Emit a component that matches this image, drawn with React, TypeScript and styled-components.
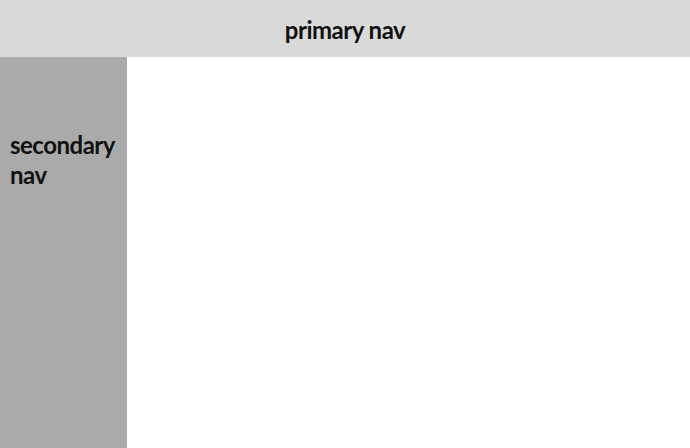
import React from "react";
import styled, { createGlobalStyle } from "styled-components";

const Global = createGlobalStyle`
  html, body {
    margin: 0;
    padding: 0;
    height: 100%;
  }
  body {
    font-family: Lato, "Open Sans", sans-serif;
    color: #111;
  }
  #root {
    height: 100%;
  }
`;

const Layout = styled.div`
  display: grid;
  grid-template-columns: 127px 1fr;
  grid-template-rows: 57px 1fr;
  height: 100vh;
`;

const PrimaryNav = styled.header`
  grid-column: 1 / 3;
  background: #d9d9d9;
  display: flex;
  align-items: center;
  justify-content: center;
  padding-top: 2px;
`;

const SecondaryNav = styled.nav`
  background: #aaaaaa;
  padding: 73px 10px 0;
`;

const Main = styled.main`
  background: #fff;
`;

const Title = styled.h2`
  margin: 0;
  font-size: 24px;
  font-weight: 700;
  line-height: 30px;
  letter-spacing: -0.5px;
`;

export default function App() {
  return (
    <>
      <Global />
      <Layout>
        <PrimaryNav>
          <Title>primary nav</Title>
        </PrimaryNav>
        <SecondaryNav>
          <Title>secondary nav</Title>
        </SecondaryNav>
        <Main />
      </Layout>
    </>
  );
}
